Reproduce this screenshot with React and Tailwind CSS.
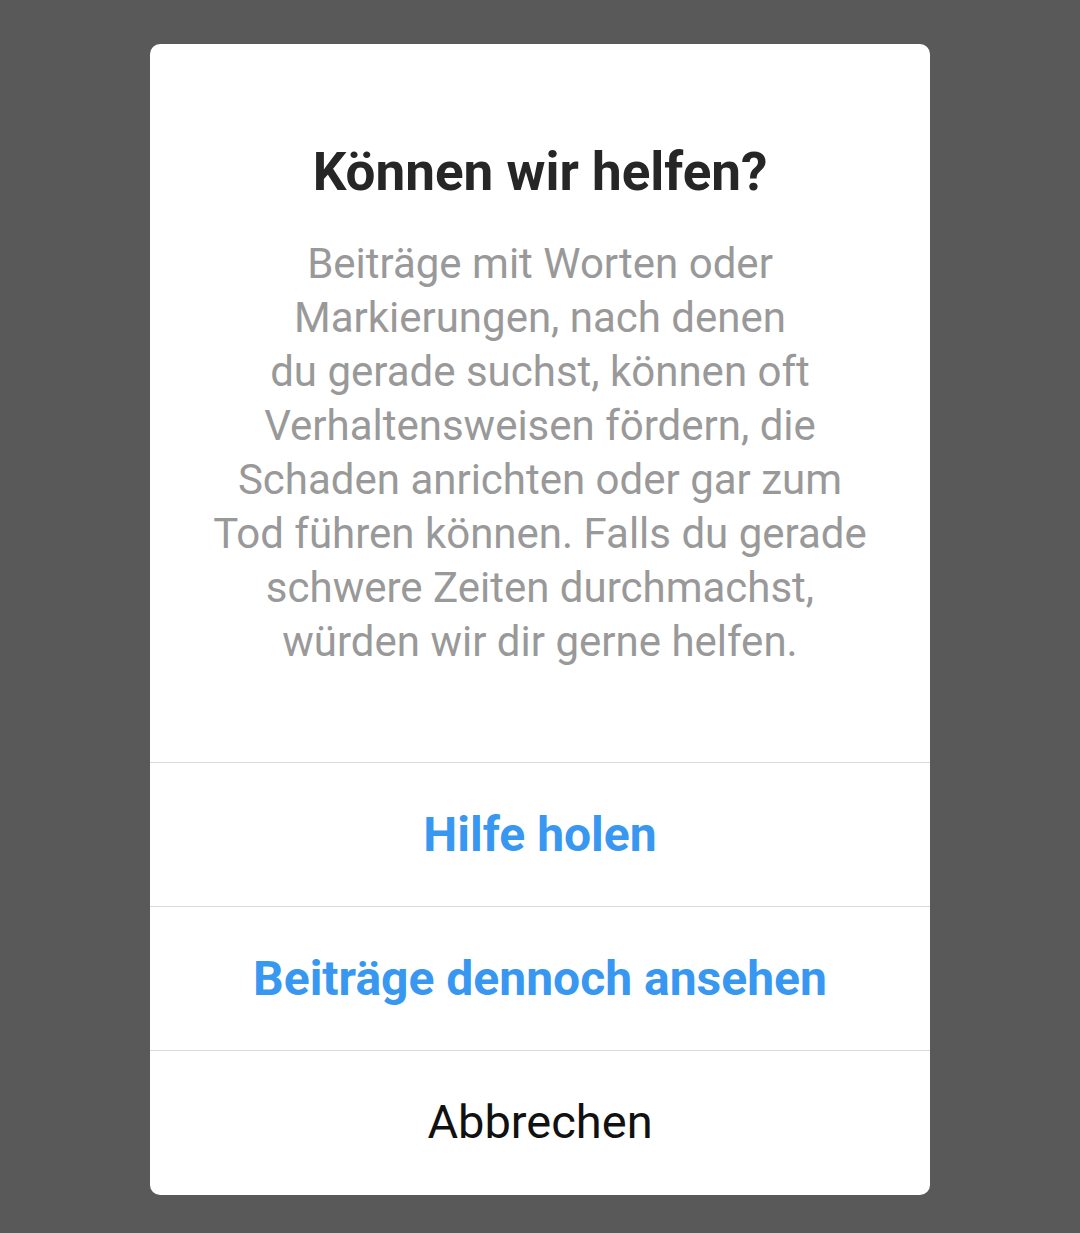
import React from 'react';

const lines = [
  'Beiträge mit Worten oder',
  'Markierungen, nach denen',
  'du gerade suchst, können oft',
  'Verhaltensweisen fördern, die',
  'Schaden anrichten oder gar zum',
  'Tod führen können. Falls du gerade',
  'schwere Zeiten durchmachst,',
  'würden wir dir gerne helfen.',
];

const App = () => {
  return (
    <div className="min-h-[1233px] w-full bg-[#595959] flex justify-center pt-[44px]" style={{ fontFamily: 'Roboto, "Noto Sans", sans-serif' }}>
      <div className="w-[780px] h-[1151px] bg-white rounded-[10px] flex flex-col overflow-hidden">
        {/* Header */}
        <div className="flex flex-col items-center pt-[98px] pb-[93px]">
          <h2 className="text-[53px] leading-[60px] font-bold text-[#262626]">Können wir helfen?</h2>
          <p className="mt-[35px] text-[42px] leading-[54px] text-[#999999] text-center">
            {lines.map((l, i) => (
              <React.Fragment key={i}>
                {l}
                {i < lines.length - 1 && <br />}
              </React.Fragment>
            ))}
          </p>
        </div>
        {/* Actions */}
        <button className="h-[144px] shrink-0 border-t border-[#dbdbdb] text-[48px] font-bold text-[#3897f0]">
          Hilfe holen
        </button>
        <button className="h-[144px] shrink-0 border-t border-[#dbdbdb] text-[48px] font-bold text-[#3897f0]">
          Beiträge dennoch ansehen
        </button>
        <button className="h-[144px] shrink-0 border-t border-[#dbdbdb] text-[47px] text-[#111111]">
          Abbrechen
        </button>
      </div>
    </div>
  );
};

export default App;
